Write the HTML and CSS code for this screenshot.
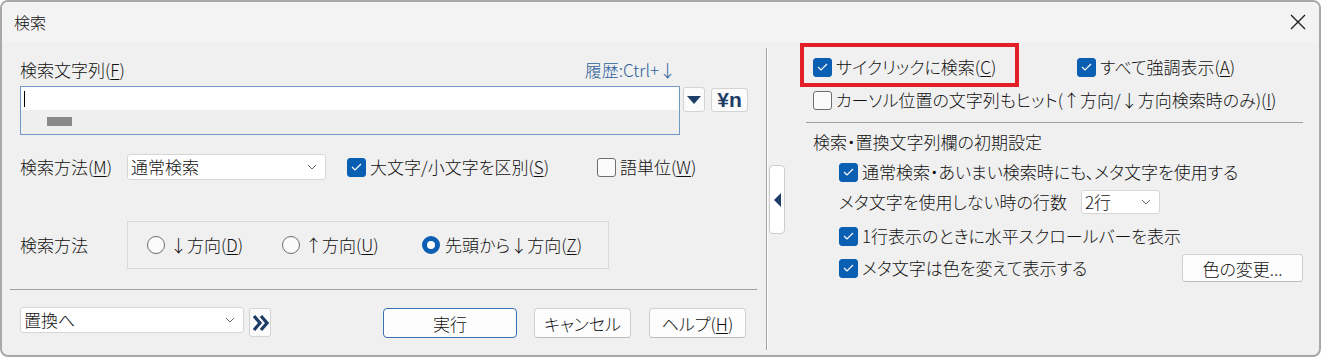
FILE: index.html
```html
<!DOCTYPE html>
<html lang="ja">
<head>
    <meta charset="UTF-8">
    <title>検索</title>
    <link rel="stylesheet" href="styles.css">
</head>
<body>

    <div class="window">
        <div class="titlebar">
            <span class="title">検索</span>
            <svg class="close" width="16" height="16" viewBox="0 0 16 16"><path d="M1 1L15 15M15 1L1 15" stroke="#1a1a1a" stroke-width="1.3" fill="none"/></svg>
        </div>

        <div class="main">
            <div class="left">
                <div class="row-head">
                    <span>検索文字列(<u>F</u>)</span>
                    <span class="history">履歴:Ctrl+↓</span>
                </div>

                <div class="row-input">
                    <div class="textbox">
                        <div class="textbox-line"><span class="caret"></span></div>
                        <div class="textbox-rest"><span class="block"></span></div>
                    </div>
                    <div class="icon-btn drop">
                        <svg width="14" height="8" viewBox="0 0 14 8"><path d="M0 0H14L7 8Z" fill="#1e3d66"/></svg>
                    </div>
                    <div class="icon-btn yen">¥n</div>
                </div>

                <div class="row-opts">
                    <span class="lbl">検索方法(<u>M</u>)</span>
                    <div class="select method">
                        <span>通常検索</span>
                        <svg class="chev" width="10" height="6" viewBox="0 0 10 6"><path d="M1 1L5 5L9 1" stroke="#666" fill="none"/></svg>
                    </div>
                    <span class="check case"><span class="cb on"><svg width="11" height="8" viewBox="0 0 11 8"><path d="M1 4L4 7L10 1" stroke="#fff" stroke-width="1.2" fill="none"/></svg></span>大文字/小文字を区別(<u>S</u>)</span>
                    <span class="check"><span class="cb"></span>語単位(<u>W</u>)</span>
                </div>

                <div class="row-dir">
                    <span class="lbl">検索方法</span>
                    <div class="group">
                        <span class="radio-item r1"><span class="radio"></span>↓方向(<u>D</u>)</span>
                        <span class="radio-item r2"><span class="radio"></span>↑方向(<u>U</u>)</span>
                        <span class="radio-item"><span class="radio on"></span>先頭から↓方向(<u>Z</u>)</span>
                    </div>
                </div>

                <div class="sep"></div>

                <div class="row-bottom">
                    <div class="select replace">
                        <span>置換へ</span>
                        <svg class="chev" width="10" height="6" viewBox="0 0 10 6"><path d="M1 1L5 5L9 1" stroke="#666" fill="none"/></svg>
                    </div>
                    <div class="icon-btn more">
                        <svg width="17" height="18" viewBox="0 0 17 18"><path d="M2 2L8 9L2 16M9 2L15 9L9 16" stroke="#1e3d66" stroke-width="3.2" fill="none"/></svg>
                    </div>
                    <button class="btn default run">実行</button>
                    <button class="btn cancel">キャンセル</button>
                    <button class="btn help">ヘルプ(<u>H</u>)</button>
                </div>
            </div>

            <div class="divider"></div>

            <div class="toggle-col">
                <div class="toggle">
                    <svg width="7" height="14" viewBox="0 0 7 14"><path d="M7 0V14L0 7Z" fill="#1e3d66"/></svg>
                </div>
            </div>

            <div class="right">
                <div class="rrow">
                    <span class="check cyclic"><span class="cb on"><svg width="11" height="8" viewBox="0 0 11 8"><path d="M1 4L4 7L10 1" stroke="#fff" stroke-width="1.2" fill="none"/></svg></span>サイクリックに検索(<u>C</u>)</span>
                    <span class="check"><span class="cb on"><svg width="11" height="8" viewBox="0 0 11 8"><path d="M1 4L4 7L10 1" stroke="#fff" stroke-width="1.2" fill="none"/></svg></span>すべて強調表示(<u>A</u>)</span>
                </div>
                <div class="rrow row-b">
                    <span class="check"><span class="cb"></span>カーソル位置の文字列もヒット(↑方向/↓方向検索時のみ)(<u>I</u>)</span>
                </div>

                <div class="rsep"></div>

                <div class="heading">検索・置換文字列欄の初期設定</div>

                <div class="rrow indent row-c">
                    <span class="check"><span class="cb on"><svg width="11" height="8" viewBox="0 0 11 8"><path d="M1 4L4 7L10 1" stroke="#fff" stroke-width="1.2" fill="none"/></svg></span>通常検索・あいまい検索時にも、メタ文字を使用する</span>
                </div>
                <div class="rrow indent row-d">
                    <span class="lines-lbl">メタ文字を使用しない時の行数</span>
                    <div class="select lines">
                        <span>2行</span>
                        <svg class="chev" width="10" height="6" viewBox="0 0 10 6"><path d="M1 1L5 5L9 1" stroke="#666" fill="none"/></svg>
                    </div>
                </div>
                <div class="rrow indent row-e">
                    <span class="check"><span class="cb on"><svg width="11" height="8" viewBox="0 0 11 8"><path d="M1 4L4 7L10 1" stroke="#fff" stroke-width="1.2" fill="none"/></svg></span>1行表示のときに水平スクロールバーを表示</span>
                </div>
                <div class="rrow indent row-f">
                    <span class="check"><span class="cb on"><svg width="11" height="8" viewBox="0 0 11 8"><path d="M1 4L4 7L10 1" stroke="#fff" stroke-width="1.2" fill="none"/></svg></span>メタ文字は色を変えて表示する</span>
                    <button class="btn color">色の変更...</button>
                </div>
            </div>
        </div>

        <!-- red annotation box -->
        <div class="mark"></div>
    </div>

</body>
</html>
```

FILE: styles.css
```css
* {
    box-sizing: border-box;
}

body {
    margin: 0;
    background: #ffffff;
    font-family: "Meiryo UI", "Noto Sans CJK JP", "Noto Sans", sans-serif;
    font-size: 17px;
    font-weight: 300;
    font-feature-settings: "palt";
    color: #111111;
    line-height: 20px;
}

u {
    text-underline-offset: 2px;
}

.window {
    position: relative;
    width: 1321px;
    height: 357px;
    border: 2px solid #a8a8a8;
    border-radius: 8px;
    background: #f0f0f0;
    overflow: hidden;
    display: flex;
    flex-direction: column;
}

.titlebar {
    height: 40px;
    background: #f3f3f3;
    display: flex;
    align-items: center;
    justify-content: space-between;
    padding: 0 13px 0 12px;
}

.title {
    font-size: 16px;
}

.main {
    flex: 1;
    display: flex;
}

/* left half */
.left {
    width: 768px;
    padding: 18px 0 0 18px;
}

.row-head {
    width: 660px;
    height: 20px;
    display: flex;
    justify-content: space-between;
}

.history {
    color: #2e5f9a;
    padding-right: 4px;
}

.row-input {
    margin-top: 6px;
    display: flex;
    align-items: flex-start;
}

.textbox {
    width: 660px;
    height: 49px;
    border: 1px solid #6f98c2;
    background: #efefef;
}

.textbox-line {
    height: 23px;
    background: #ffffff;
    padding: 4px 0 0 3px;
}

.caret {
    display: block;
    width: 1px;
    height: 16px;
    background: #000;
}

.textbox-rest {
    padding: 7px 0 0 26px;
}

.block {
    display: block;
    width: 25px;
    height: 9px;
    background: #8a8a8a;
}

.icon-btn {
    display: flex;
    align-items: center;
    justify-content: center;
    background: #fbfbfb;
    border: 1px solid #d3d3d3;
    border-radius: 3px;
}

.drop {
    width: 22px;
    height: 25px;
    margin: 1px 0 0 3px;
}

.yen {
    width: 37px;
    height: 24px;
    margin: 2px 0 0 6px;
    font-family: "Liberation Sans", Arial, sans-serif;
    font-weight: bold;
    font-size: 21px;
    font-feature-settings: normal;
    color: #1e3d66;
}

.row-opts {
    margin-top: 19px;
    height: 26px;
    display: flex;
    align-items: center;
}

.lbl {
    width: 107px;
}

.select {
    height: 26px;
    background: #ffffff;
    border: 1px solid #d6d6d6;
    border-radius: 3px;
    display: flex;
    align-items: center;
    justify-content: space-between;
    padding: 0 8px 0 3px;
}

.method {
    width: 199px;
    margin-right: 21px;
}

.check {
    display: flex;
    align-items: center;
}

.case {
    width: 250px;
}

.cb {
    width: 19px;
    height: 19px;
    margin-right: 4px;
    border: 1px solid #6e6e6e;
    border-radius: 3px;
    background: #fbfbfb;
    display: flex;
    align-items: center;
    justify-content: center;
    flex-shrink: 0;
}

.cb.on {
    background: #0b5fb3;
    border-color: #0b5fb3;
}

.row-dir {
    margin-top: 41px;
    height: 48px;
    display: flex;
    align-items: center;
}

.group {
    width: 482px;
    height: 48px;
    border: 1px solid #d9d9d9;
    display: flex;
    align-items: center;
    padding-left: 19px;
}

.radio-item {
    display: flex;
    align-items: center;
}

.r1 {
    width: 135px;
}

.r2 {
    width: 140px;
}

.radio {
    width: 18px;
    height: 18px;
    margin-right: 5px;
    border: 1px solid #6e6e6e;
    border-radius: 50%;
    background: #fbfbfb;
    flex-shrink: 0;
}

.radio.on {
    border: 5px solid #0b5fb3;
    background: #ffffff;
}

.sep {
    margin: 20px 0 0 -10px;
    width: 747px;
    height: 1px;
    background: #a0a0a0;
}

.row-bottom {
    margin-top: 17px;
    display: flex;
    align-items: flex-start;
}

.replace {
    width: 224px;
}

.more {
    width: 22px;
    height: 29px;
    margin: 1px 0 0 5px;
}

.btn {
    height: 30px;
    margin-top: 1px;
    background: #fdfdfd;
    border: 1px solid #d0d0d0;
    border-bottom-color: #bcbcbc;
    border-radius: 4px;
    font-family: inherit;
    font-size: 17px;
    font-weight: 300;
    font-feature-settings: "palt";
    color: #111111;
    padding: 0;
}

.btn.default {
    border: 1px solid #3a72b0;
}

.run {
    width: 134px;
    margin-left: 112px;
}

.cancel {
    width: 97px;
    margin-left: 17px;
}

.help {
    width: 97px;
    margin-left: 18px;
}

/* divider and collapse toggle */
.divider {
    width: 2px;
    margin: 6px 0 5px;
    border-left: 1px solid #a0a0a0;
    border-right: 1px solid #ffffff;
}

.toggle-col {
    width: 20px;
}

.toggle {
    width: 16px;
    height: 69px;
    margin: 123px 0 0 1px;
    background: #ffffff;
    border: 1px solid #cdcdcd;
    border-radius: 4px;
    display: flex;
    align-items: center;
    justify-content: center;
}

/* right half */
.right {
    flex: 1;
    padding: 15px 16px 0 25px;
}

.rrow {
    height: 20px;
    display: flex;
    align-items: center;
}

.cyclic {
    width: 264px;
}

.row-b {
    margin-top: 13px;
}

.rsep {
    margin: 12px 0 0 -7px;
    width: 497px;
    height: 1px;
    background: #a0a0a0;
}

.heading {
    margin-top: 9px;
    height: 20px;
}

.indent {
    padding-left: 26px;
}

.row-c {
    margin-top: 10px;
}

.row-d {
    margin-top: 8px;
    height: 24px;
}

.lines-lbl {
    width: 242px;
    flex-shrink: 0;
}

.lines {
    width: 79px;
    height: 24px;
}

.row-e {
    margin-top: 12px;
}

.row-f {
    margin-top: 8px;
    height: 28px;
    justify-content: space-between;
}

.btn.color {
    width: 121px;
    height: 28px;
    margin: 0;
}

.mark {
    position: absolute;
    left: 798px;
    top: 41px;
    width: 219px;
    height: 44px;
    border: 4px solid #e41e26;
}
```
